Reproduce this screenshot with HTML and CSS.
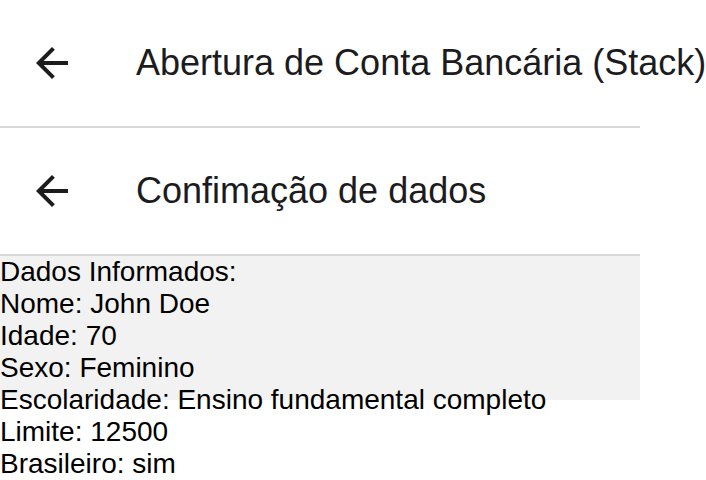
FILE: index.html
```html
<!DOCTYPE html>
<html lang="pt">
<head>
<meta charset="utf-8">
<link rel="stylesheet" href="styles.css">
</head>
<body>
<div class="screen">
  <header class="appbar">
    <button class="back" aria-label="Voltar">
      <svg viewBox="0 0 24 24" width="48" height="48"><path d="M20 11H7.83l5.59-5.59L12 4l-8 8 8 8 1.41-1.41L7.83 13H20v-2z"/></svg>
    </button>
    <h1 class="title">Abertura de Conta Bancária (Stack)</h1>
  </header>
  <header class="appbar">
    <button class="back" aria-label="Voltar">
      <svg viewBox="0 0 24 24" width="48" height="48"><path d="M20 11H7.83l5.59-5.59L12 4l-8 8 8 8 1.41-1.41L7.83 13H20v-2z"/></svg>
    </button>
    <h1 class="title">Confimação de dados</h1>
  </header>
  <section class="content">
    <p>Dados Informados:</p>
    <p>Nome: John Doe</p>
    <p>Idade: 70</p>
    <p>Sexo: Feminino</p>
    <p>Escolaridade: Ensino fundamental completo</p>
    <p>Limite: 12500</p>
    <p>Brasileiro: sim</p>
  </section>
</div>
</body>
</html>
```

FILE: styles.css
```css
html, body {
  margin: 0;
  padding: 0;
  background: #ffffff;
}
body {
  font-family: "Liberation Sans", Arial, sans-serif;
  min-height: 480px;
}
.screen {
  width: 640px;
}
.appbar {
  display: flex;
  align-items: center;
  height: 126px;
  border-bottom: 2px solid #d8d8d8;
  background: #ffffff;
}
.back {
  display: flex;
  align-items: center;
  justify-content: center;
  width: 48px;
  height: 48px;
  margin-left: 28px;
  padding: 0;
  border: 0;
  background: none;
}
.back svg {
  display: block;
  fill: #1c1c1e;
}
.title {
  margin: 0 0 0 60px;
  font-size: 36px;
  font-weight: 400;
  color: #1c1c1e;
  white-space: nowrap;
}
.content {
  height: 144px;
  background: #f2f2f2;
}
.content p {
  margin: 0;
  font-size: 28px;
  line-height: 32px;
  color: #000000;
  white-space: nowrap;
}
```
